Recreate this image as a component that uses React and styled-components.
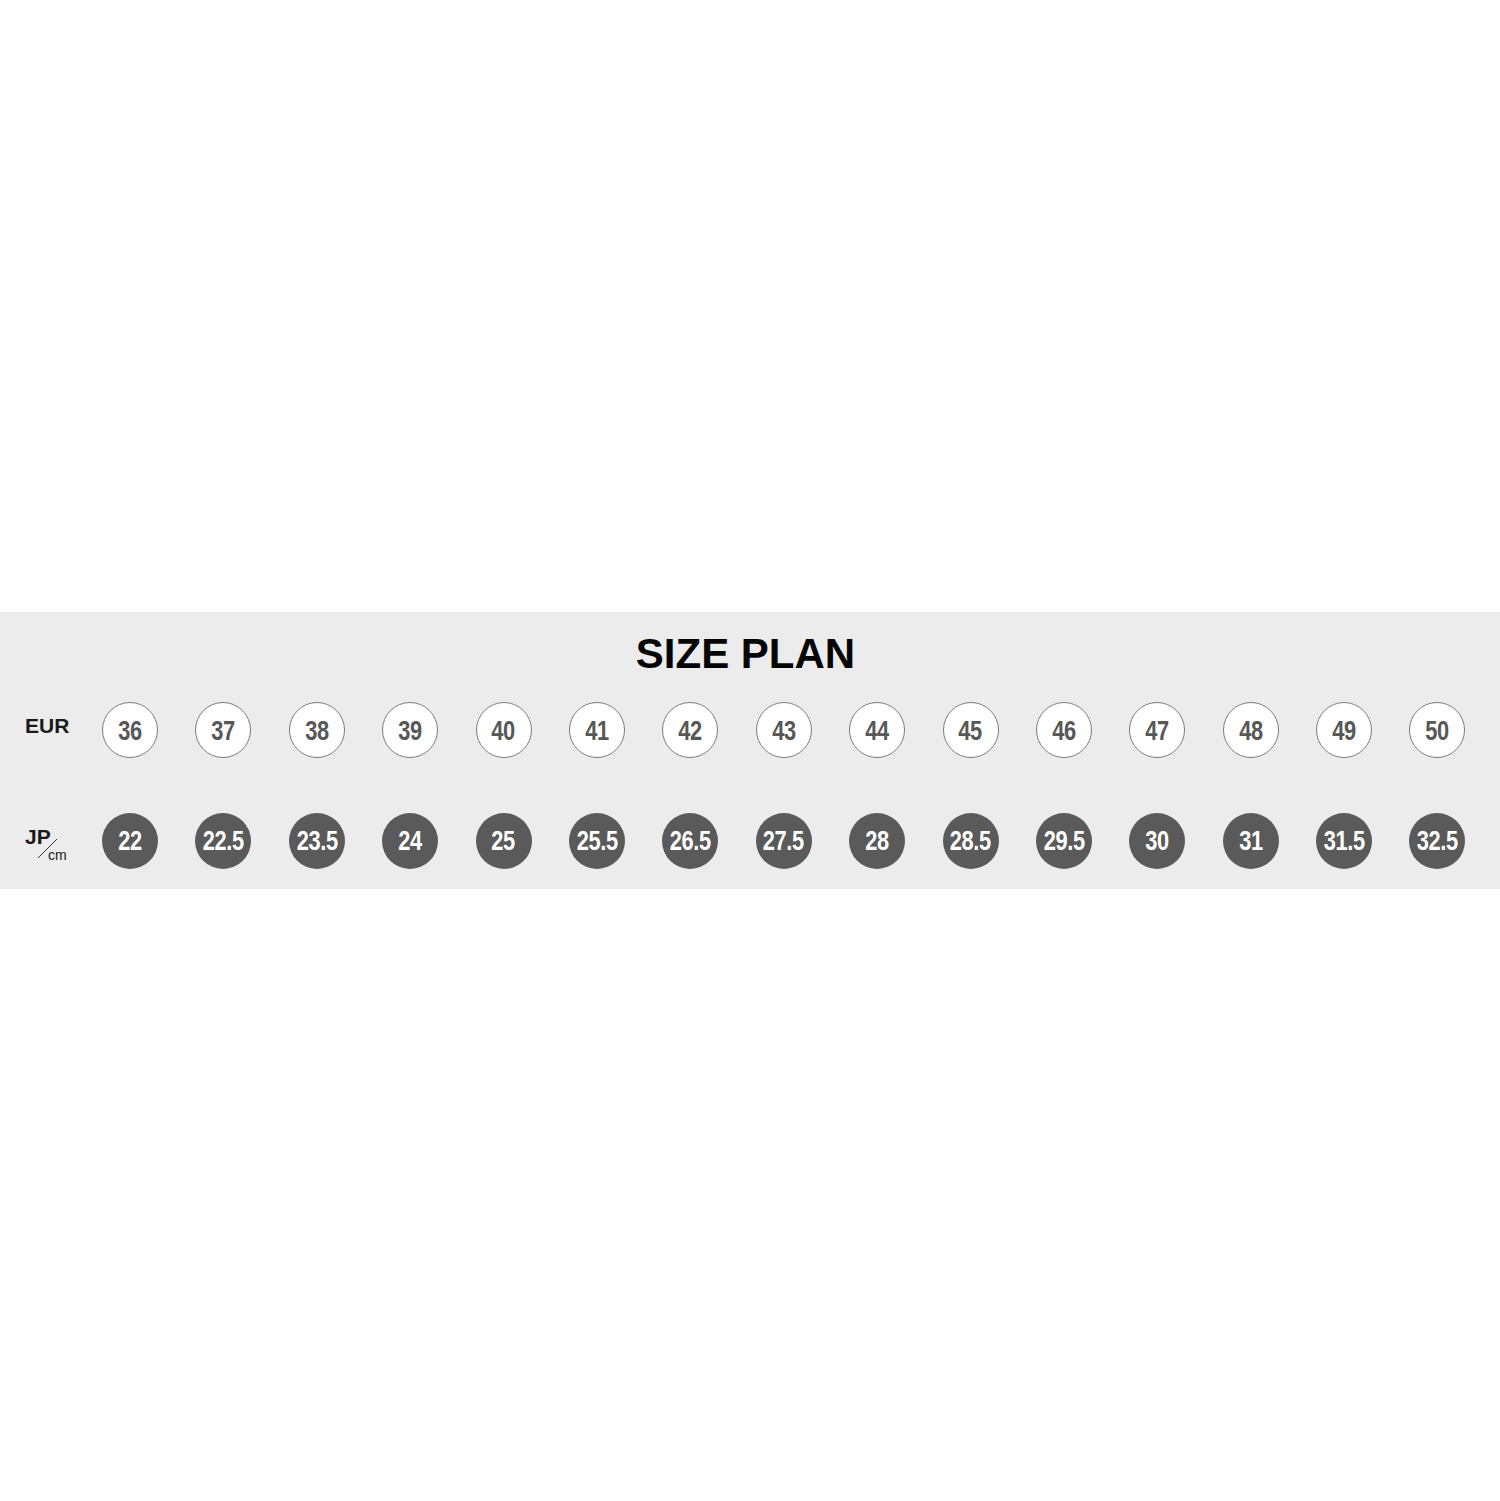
import React from 'react';
import styled, { createGlobalStyle } from 'styled-components';

const GlobalStyle = createGlobalStyle`
  html, body {
    margin: 0;
    padding: 0;
    background: #ffffff;
  }
  body {
    font-family: "Liberation Sans", Arial, sans-serif;
  }
`;

const Page = styled.div`
  width: 1500px;
  height: 1501px;
  display: flex;
  flex-direction: column;
  justify-content: flex-start;
  padding-top: 612px;
  box-sizing: border-box;
`;

const Band = styled.section`
  width: 100%;
  background: #ececec;
  padding: 21px 0 20px;
  box-sizing: border-box;
  display: flex;
  flex-direction: column;
`;

const Title = styled.h1`
  margin: 0 0 27px;
  padding-right: 9px;
  font-size: 42px;
  line-height: 42px;
  font-weight: 700;
  color: #050505;
  text-align: center;
`;

const Row = styled.div`
  display: flex;
  align-items: center;
  padding-left: 25px;
  margin-top: ${p => p.gap || 0}px;
`;

const Label = styled.div`
  width: 77px;
  flex-shrink: 0;
  position: relative;
  height: 30px;
  font-size: 21px;
  font-weight: 700;
  color: #1a1a1a;
  line-height: 22px;
`;

const Unit = styled.span`
  position: absolute;
  left: 23px;
  top: 18px;
  font-size: 14px;
  font-weight: 400;
  color: #1a1a1a;
`;

const Slash = styled.svg`
  position: absolute;
  left: 12px;
  top: 12px;
`;

const Circles = styled.div`
  display: flex;
  gap: 37.4px;
`;

const Circle = styled.div`
  width: 56px;
  height: 56px;
  border-radius: 50%;
  box-sizing: border-box;
  display: flex;
  align-items: center;
  justify-content: center;
  background: ${p => (p.dark ? '#5a5a5a' : '#ffffff')};
  border: ${p => (p.dark ? 'none' : '1.3px solid #7a7a7a')};
  color: ${p => (p.dark ? '#ffffff' : '#575757')};
`;

const Num = styled.span`
  display: inline-block;
  font-size: 28px;
  font-weight: 700;
  letter-spacing: -0.5px;
  transform: scaleX(0.78);
  line-height: 1;
  margin-top: 1px;
`;

const eur = [36, 37, 38, 39, 40, 41, 42, 43, 44, 45, 46, 47, 48, 49, 50];
const jp = ['22', '22.5', '23.5', '24', '25', '25.5', '26.5', '27.5', '28', '28.5', '29.5', '30', '31', '31.5', '32.5'];

const App = () => {
    return (
        <Page>
            <GlobalStyle />
            <Band>
                <Title>SIZE PLAN</Title>
                <Row>
                    <Label>EUR</Label>
                    <Circles>
                        {eur.map(n => (
                            <Circle key={n}>
                                <Num>{n}</Num>
                            </Circle>
                        ))}
                    </Circles>
                </Row>
                <Row gap={54.5}>
                    <Label>
                        JP
                        <Slash width="22" height="22" viewBox="0 0 22 22">
                            <line x1="1" y1="20" x2="20" y2="1" stroke="#333" strokeWidth="1" />
                        </Slash>
                        <Unit>cm</Unit>
                    </Label>
                    <Circles>
                        {jp.map(n => (
                            <Circle dark key={n}>
                                <Num>{n}</Num>
                            </Circle>
                        ))}
                    </Circles>
                </Row>
            </Band>
        </Page>
    );
};

export default App;
